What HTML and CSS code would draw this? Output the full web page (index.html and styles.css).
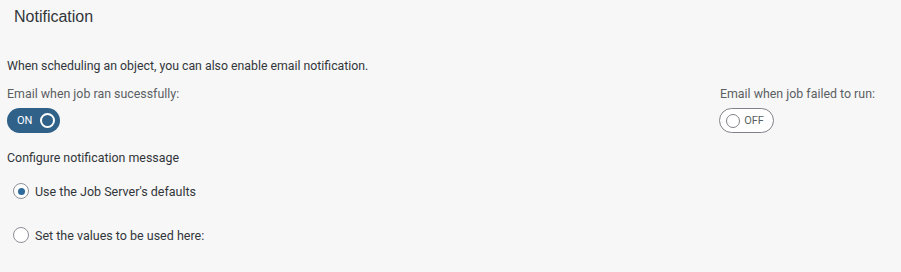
FILE: index.html
```html
<!DOCTYPE html>
<html>
<head>
<meta charset="utf-8">
<link rel="stylesheet" href="styles.css">
</head>
<body>
<div class="page">
  <div class="header">Notification</div>
  <div class="content">
    <p class="desc">When scheduling an object, you can also enable email notification.</p>
    <div class="switches">
      <div class="sw-col">
        <div class="label">Email when job ran sucessfully:</div>
        <div class="toggle on"><span class="tx">ON</span><span class="knob"></span></div>
      </div>
      <div class="sw-col right">
        <div class="label">Email when job failed to run:</div>
        <div class="toggle off"><span class="knob"></span><span class="tx">OFF</span></div>
      </div>
    </div>
    <div class="section">Configure notification message</div>
    <div class="radios">
      <div class="radio-row"><span class="radio checked"></span><span class="rtext">Use the Job Server's defaults</span></div>
      <div class="radio-row"><span class="radio"></span><span class="rtext">Set the values to be used here:</span></div>
    </div>
  </div>
</div>
</body>
</html>
```
FILE: styles.css
```css
html, body { margin: 0; padding: 0; }
body {
  background: #f7f7f7;
  font-family: Roboto, "Liberation Sans", Arial, sans-serif;
  color: #32363a;
  width: 901px;
  height: 272px;
  overflow: hidden;
}
.header {
  height: 33px;
  line-height: 33px;
  padding-left: 14px;
  font-size: 16px;
  font-family: "Liberation Sans", Arial, sans-serif;
  color: #32363a;
}
.content { padding: 0 26px 0 7px; }
.desc {
  margin: 25px 0 0;
  font-size: 12.3px;
  line-height: 16px;
}
.switches {
  display: flex;
  justify-content: space-between;
  margin-top: 12px;
}
.sw-col { display: flex; flex-direction: column; align-items: flex-start; }
.label {
  font-size: 12.4px;
  line-height: 16px;
  color: #5b5f63;
}
.toggle {
  margin-top: 6px;
  height: 25px;
  box-sizing: border-box;
  border-radius: 13px;
  display: flex;
  align-items: center;
  font-size: 11px;
}
.toggle.on {
  width: 53px;
  background: #2f6189;
  color: #fff;
  padding: 0 5px 0 10px;
  justify-content: space-between;
}
.toggle.on .knob {
  width: 15px; height: 15px;
  border: 2px solid #fff;
  border-radius: 50%;
  box-sizing: border-box;
}
.toggle.off {
  width: 55px;
  border: 1px solid #7f8287;
  background: #fff;
  color: #5b5f63;
  padding: 0 9px 0 6px;
  justify-content: space-between;
  margin-left: -1px;
}
.toggle.off .knob {
  width: 14px; height: 14px;
  border: 1.5px solid #7f8287;
  border-radius: 50%;
  box-sizing: border-box;
}
.section {
  margin-top: 17px;
  font-size: 12.4px;
  line-height: 16px;
}
.radios { display: flex; flex-direction: column; gap: 28px; margin-top: 17px; }
.radio-row {
  display: flex;
  align-items: center;
  height: 16px;
  padding-left: 6px;
}
.radio {
  width: 16px; height: 16px;
  border: 1px solid #8d9096;
  border-radius: 50%;
  box-sizing: border-box;
  background: #fff;
  position: relative;
  margin-right: 6px;
}
.radio.checked::after {
  content: "";
  position: absolute;
  left: 3.5px; top: 3.5px;
  width: 7px; height: 7px;
  border-radius: 50%;
  background: #2f6a9c;
}
.rtext { font-size: 12.5px; color: #32363a; }
```
